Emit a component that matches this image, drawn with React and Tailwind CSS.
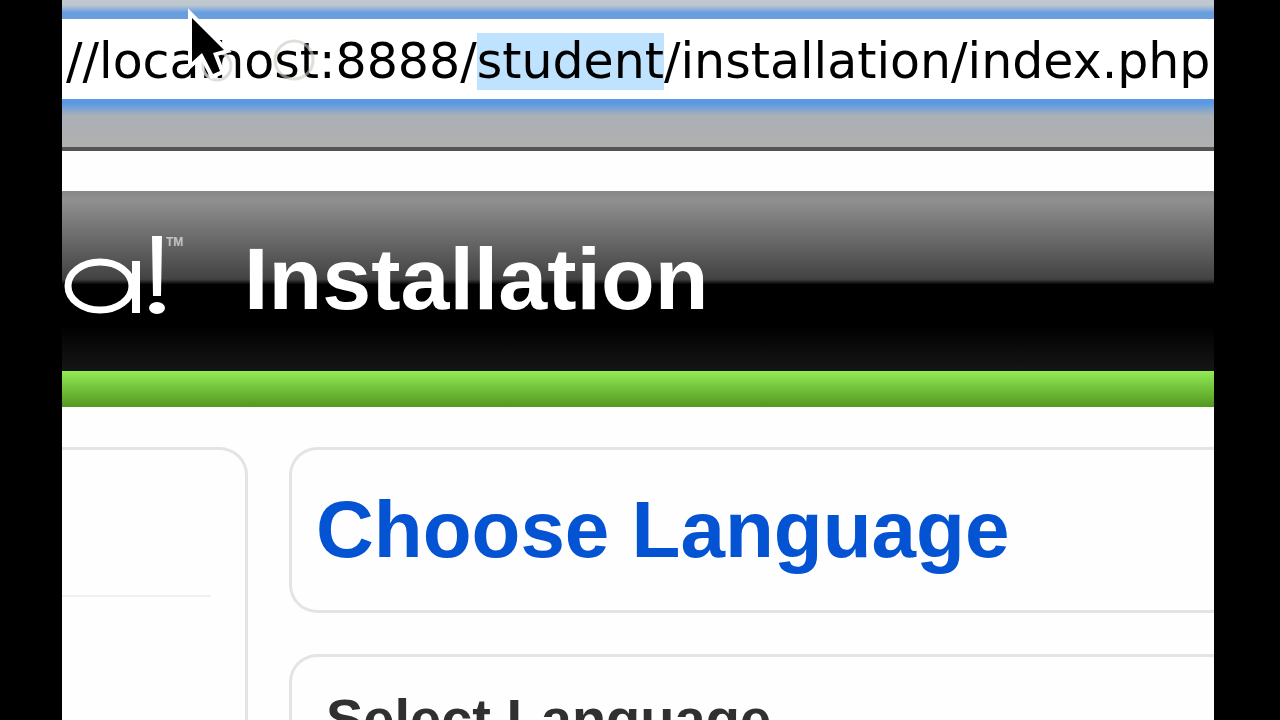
import { useEffect, useRef } from 'react';

const url = '//localhost:8888/student/installation/index.php';
const folder = 'student';

const AddressBar = () => {
  const inputRef = useRef(null);

  // keep the install folder selected in the address field
  useEffect(() => {
    const start = url.indexOf(folder);
    inputRef.current.focus({ preventScroll: true });
    inputRef.current.setSelectionRange(start, start + folder.length);
  }, []);

  return (
    <div className="relative border-b-4 border-[#555555] bg-[#b0b0b0]">
      <div className="h-[19px] bg-linear-to-b from-[#c0c8cf] from-25% via-[#6a9fdf] via-65% to-[#6a9fdf]" />
      <input
        ref={inputRef}
        type="text"
        aria-label="Address"
        defaultValue={url}
        spellCheck={false}
        className="block h-20 w-full bg-white pt-[5px] pl-1 font-['DejaVu_Sans',sans-serif] text-[49px] leading-[58px] text-black outline-none selection:bg-[#bfe3ff] selection:text-black"
      />
      <div className="h-12 bg-linear-to-b from-[#5c99e4] from-10% via-[#aab0b5] via-35% to-[#b0b0b0]" />
      <Pointer />
    </div>
  );
};

const Pointer = () => (
  <svg
    className="pointer-events-none absolute top-0 left-[118px]"
    width="140"
    height="92"
    viewBox="0 0 140 92"
    aria-hidden="true"
  >
    <circle cx="114" cy="60" r="19" fill="none" stroke="#c8cac0" strokeWidth="3" opacity="0.6" />
    <circle cx="37" cy="66" r="14" fill="none" stroke="#d4d6d2" strokeWidth="3" opacity="0.8" />
    <path
      d="M12 18 V62 L22 53 L33 74 L40 71 L33 53 L44 50 Z"
      fill="#000000"
      stroke="#ffffff"
      strokeWidth="8"
      paintOrder="stroke"
    />
  </svg>
);

const Logo = () => (
  <svg width="124" height="84" viewBox="0 0 124 84" role="img" aria-label="a!">
    <g fill="none" stroke="#ffffff">
      <ellipse cx="38" cy="51" rx="32" ry="24" strokeWidth="7" />
      <path d="M74 26 V78" strokeWidth="8" />
    </g>
    <g fill="#ffffff">
      <path d="M90 1 H100 L99 61 H91 Z" />
      <ellipse cx="95" cy="73" rx="8" ry="6" />
    </g>
    <text
      x="104"
      y="11"
      fill="#c4c4c4"
      fontSize="12"
      fontWeight="bold"
      fontFamily="Liberation Sans, sans-serif"
    >
      TM
    </text>
  </svg>
);

const App = () => {
  return (
    <div className="h-screen overflow-hidden bg-black pr-[66px] pl-[62px] font-['Liberation_Sans',Arial,sans-serif]">
      <div className="h-full overflow-hidden bg-[#fefefe]">
        <AddressBar />

        {/* Header */}
        <header className="mt-10 flex h-[180px] items-start bg-[linear-gradient(#888888_0%,#909090_5%,#424242_49%,#000000_52%,#000000_75%,#161616_100%)]">
          <div className="mt-11 w-[182px] shrink-0">
            <Logo />
          </div>
          <h1 className="mt-[38px] text-[88px] leading-[100px] font-bold text-white">Installation</h1>
        </header>
        <div className="h-9 bg-linear-to-b from-[#92ec54] to-[#52981f]" />

        <div className="mt-10 flex items-start gap-[41px]">
          {/* Steps */}
          <aside className="h-80 w-[186px] shrink-0 rounded-tr-[28px] border-t-3 border-r-3 border-[#e3e4e4] pr-[34px]">
            <hr className="mt-[145px] border-t-2 border-[#f0f0f0]" />
          </aside>

          {/* Content */}
          <main className="flex min-w-0 flex-1 flex-col gap-[41px]">
            <section className="rounded-l-[28px] border-3 border-r-0 border-[#e3e4e4] py-9 pl-6">
              <h2 className="text-[80px] leading-[88px] font-bold whitespace-nowrap text-[#0453d2]">
                Choose Language
              </h2>
            </section>
            <section className="rounded-l-[28px] border-3 border-r-0 border-[#e3e4e4] py-[30px] pl-[34px]">
              <h3 className="text-[56px] leading-[64px] font-bold whitespace-nowrap text-[#303030]">
                Select Language
              </h3>
            </section>
          </main>
        </div>
      </div>
    </div>
  );
};

export default App;
